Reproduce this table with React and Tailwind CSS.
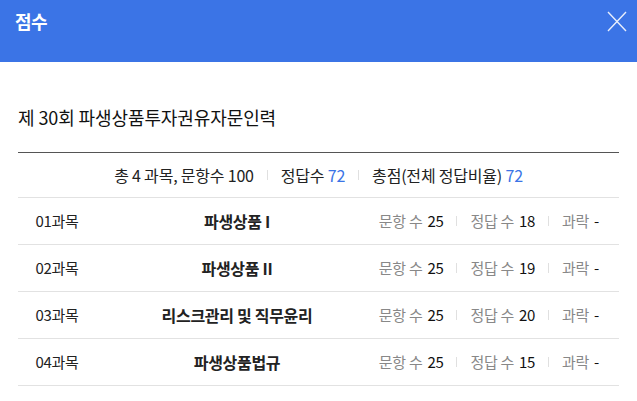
const subjects = [
  { no: "01과목", name: "파생상품 I", total: 25, correct: 18 },
  { no: "02과목", name: "파생상품 II", total: 25, correct: 19 },
  { no: "03과목", name: "리스크관리 및 직무윤리", total: 25, correct: 20 },
  { no: "04과목", name: "파생상품법규", total: 25, correct: 15 },
]

function Bar() {
  return <span className="mx-[13px] inline-block h-[10px] w-px bg-[#e0e0e0]" />
}

export default function App() {
  return (
    <div
      className="h-[401px] w-[637px] overflow-hidden bg-white text-[#222]"
      style={{ fontFamily: '"Noto Sans CJK KR", "Noto Sans", sans-serif' }}
    >
      {/* 헤더 */}
      <div className="flex h-[62px] items-start justify-between bg-[#3b74e6] pl-[15px] pr-[10px]">
        <h1 className="mt-[8px] text-[18px] font-bold tracking-[-0.5px] text-white">점수</h1>
        <svg className="mt-[11px]" width="20" height="21" viewBox="0 0 20 21" fill="none">
          <path d="M1 1L19 20M19 1L1 20" stroke="#e8eefc" strokeWidth="1.4" />
        </svg>
      </div>

      <div className="px-[18px]">
        <h2 className="mt-[42px] text-[18px] tracking-[-0.1px] text-[#111]">제 30회 파생상품투자권유자문인력</h2>

        <div className="mt-[21px] border-t border-[#555]">
          {/* 요약 */}
          <div className="flex h-[45px] items-center justify-center border-b border-[#e2e2e2] text-[16px] tracking-[-0.2px]">
            <span>총 4 과목, 문항수 100</span>
            <Bar />
            <span>
              정답수 <span className="text-[#3b74e6]">72</span>
            </span>
            <Bar />
            <span>
              총점(전체 정답비율) <span className="text-[#3b74e6]">72</span>
            </span>
          </div>

          {subjects.map((s) => (
            <div
              key={s.no}
              className="flex h-[47px] items-center border-b border-[#e2e2e2] text-[15px] tracking-[-0.3px]"
            >
              <div className="w-[78px] text-center">{s.no}</div>
              <div className="w-[282px] text-center text-[16px] font-bold tracking-[-0.3px]">{s.name}</div>
              <div className="flex flex-1 items-center justify-end pr-[20px]">
                <span className="text-[#888]">문항 수</span>
                <span className="ml-[5px] text-[#111]">{s.total}</span>
                <Bar />
                <span className="text-[#888]">정답 수</span>
                <span className="ml-[5px] text-[#111]">{s.correct}</span>
                <Bar />
                <span className="text-[#888]">과락</span>
                <span className="ml-[5px] text-[#111]">-</span>
              </div>
            </div>
          ))}
        </div>
      </div>
    </div>
  )
}
